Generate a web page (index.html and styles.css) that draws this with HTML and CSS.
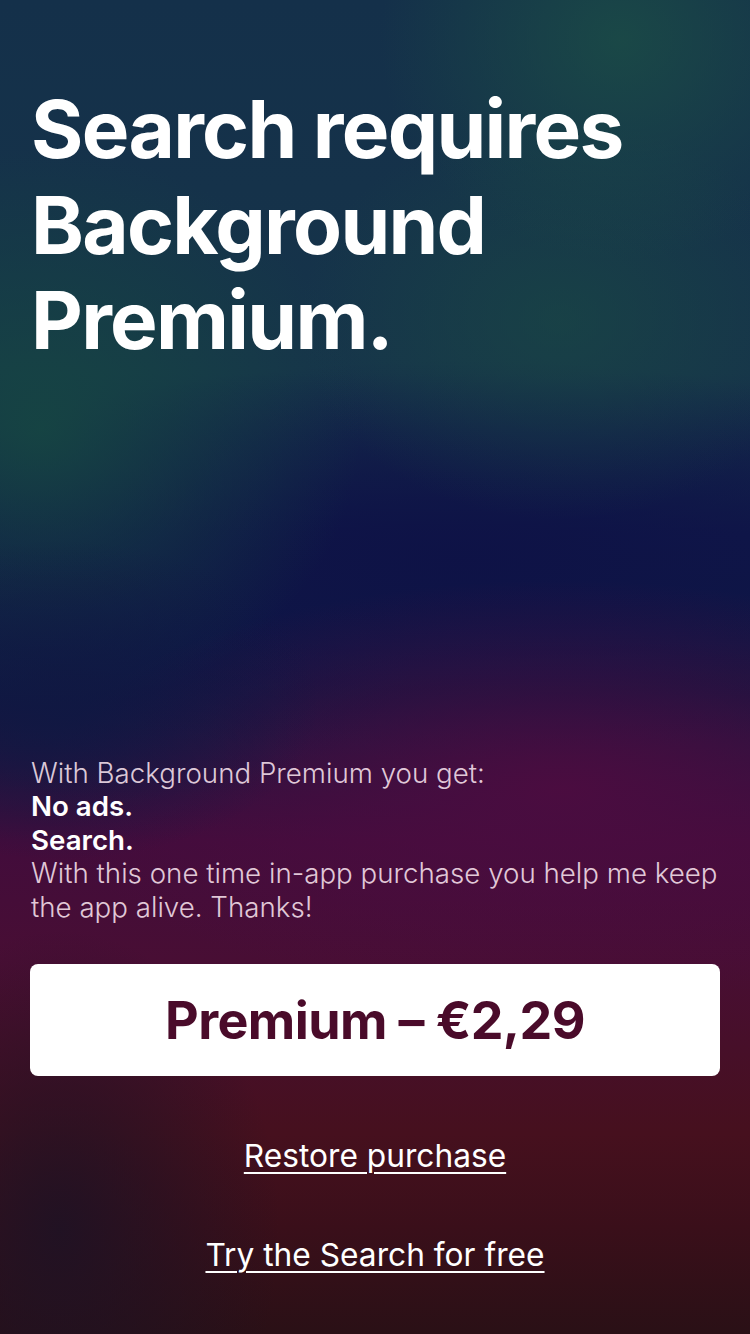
FILE: index.html
```html
<!DOCTYPE html>
<html>
<head>
<meta charset="utf-8">
<link rel="stylesheet" href="styles.css">
</head>
<body>
<div class="screen">
  <h1 class="title">Search requires Background Premium.</h1>
  <div class="bottom">
    <div class="info">
      <div>With Background Premium you get:</div>
      <div class="strong">No ads.</div>
      <div class="strong">Search.</div>
      <div>With this one time in-app purchase you help me keep the app alive. Thanks!</div>
    </div>
    <button class="buy">Premium – €2,29</button>
    <a class="link restore">Restore purchase</a>
    <a class="link try">Try the Search for free</a>
  </div>
</div>
</body>
</html>
```

FILE: styles.css
```css
html, body {
  margin: 0;
  padding: 0;
}
body {
  width: 750px;
  height: 1334px;
  overflow: hidden;
  font-family: Inter, "Noto Sans", sans-serif;
  color: #fff;
}
.screen {
  box-sizing: border-box;
  width: 750px;
  height: 1334px;
  padding: 0 30px;
  display: flex;
  flex-direction: column;
  background:
    radial-gradient(ellipse 220px 300px at 60px 1230px, rgba(30,18,36,0.9), rgba(30,18,36,0) 100%),
    radial-gradient(ellipse 260px 160px at 60px 700px, rgba(16,24,66,0.9), rgba(16,24,66,0) 100%),
    radial-gradient(ellipse 520px 210px at 560px 790px, rgba(76,12,64,0.95), rgba(76,12,64,0) 100%),
    radial-gradient(ellipse 240px 220px at 620px 40px, rgba(28,80,70,0.75), rgba(28,80,70,0) 100%),
    radial-gradient(ellipse 260px 200px at 560px 320px, rgba(26,74,68,0.6), rgba(26,74,68,0) 100%),
    radial-gradient(ellipse 320px 280px at 40px 430px, rgba(22,72,66,0.85), rgba(22,72,66,0) 100%),
    radial-gradient(ellipse 620px 200px at 460px 560px, rgba(14,18,70,0.95), rgba(14,18,70,0) 100%),
    radial-gradient(ellipse 300px 160px at 120px 640px, rgba(14,24,72,0.9), rgba(14,24,72,0) 100%),
    linear-gradient(180deg, #14304a 0%, #16344a 28%, #10184a 40%, #0f1844 48%, #12163f 52%, #221440 56%, #420c3c 63%, #480e34 72%, #46101e 85%, #3a0f1a 92%, #2a1016 100%);
}
.title {
  margin: 81px 0 0 1px;
  font-size: 80px;
  line-height: 95.5px;
  font-weight: 700;
  letter-spacing: -1.7px;
}
.bottom {
  margin-top: auto;
  display: flex;
  flex-direction: column;
  align-items: center;
  padding-bottom: 59px;
}
.info {
  align-self: stretch;
  font-size: 27.7px;
  line-height: 33.5px;
  font-weight: 300;
  color: rgba(255,235,245,0.85);
  padding-left: 1px;
}
.info .strong {
  font-weight: 600;
  color: #fff;
}
.buy {
  margin-top: 40px;
  align-self: stretch;
  height: 112px;
  border: none;
  border-radius: 8px;
  background: #fff;
  color: #4a0b2a;
  font-family: Inter, "Noto Sans", sans-serif;
  font-size: 52px;
  font-weight: 700;
  letter-spacing: -0.6px;
  padding: 0;
}
.link {
  color: #fff;
  font-size: 31.7px;
  line-height: 40px;
  text-decoration: underline;
  text-decoration-thickness: 2px;
  text-underline-offset: 5px;
}
.restore {
  margin-top: 60px;
}
.try {
  margin-top: 59px;
}
```
